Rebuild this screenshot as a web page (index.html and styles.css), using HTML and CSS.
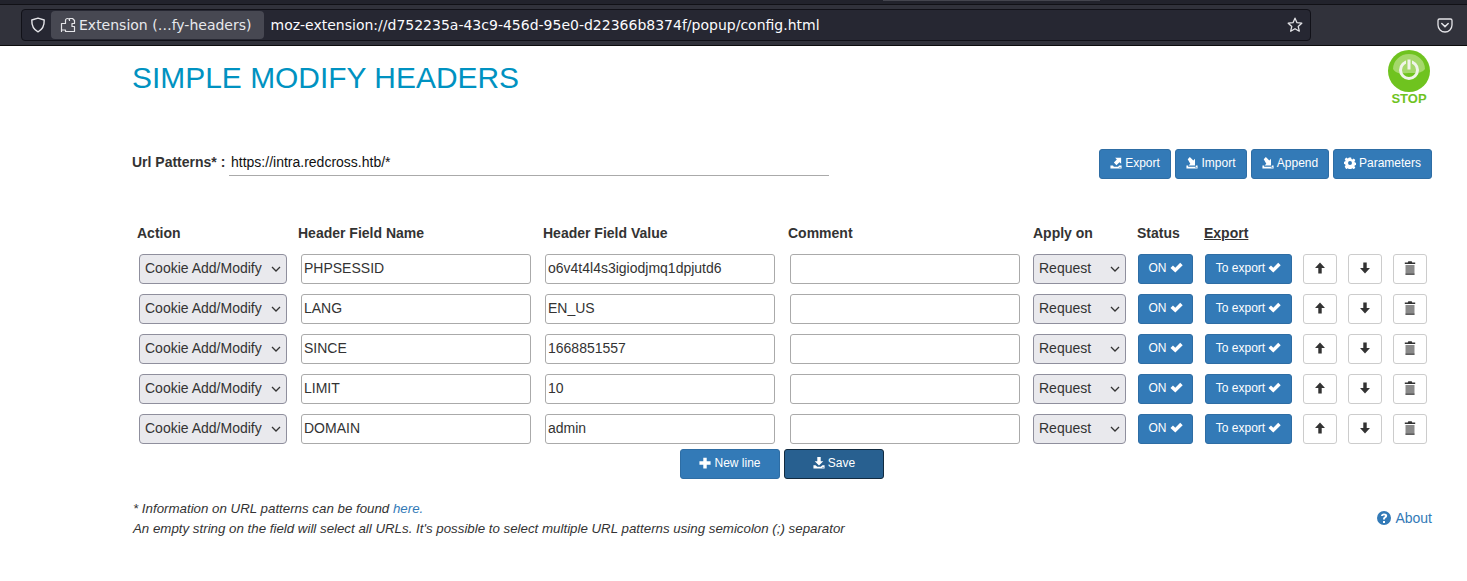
FILE: index.html
```html
<!DOCTYPE html>
<html>
	<head>
		<meta name="viewport" content="width=device-width, initial-scale=1" />
		<title>Simple Modify Headers</title>
		<link rel="stylesheet" href="styles.css">
	</head>
	<body>
		<svg class="sprites" width="0" height="0">
			<symbol id="i-export" viewBox="0 0 14 14"><path fill-rule="evenodd" d="M.5 10h3l1 1.300h5l1-1.300h3v3.500H.5zM11 12h1.300v.8H11zM4.500 6.500 8 3 6 1h7v7l-2-2-3.500 3.500z"/></symbol>
			<symbol id="i-import" viewBox="0 0 14 14"><path fill-rule="evenodd" d="M.5 10h2v1.300h9V10h2v3.500H.5zM11 12h1.300v.8H11zM2 2.500 4.500 0l4 4 2-2v8H3l2-2z"/></symbol>
			<symbol id="i-save" viewBox="0 0 14 14"><path fill-rule="evenodd" d="M5 0h4v5h3L7 10 2 5h3zM.5 9.500H3L5 11.500h4l2-2h2.500v4H.5zM11 11.800h1.300v.8H11z"/></symbol>
			<symbol id="i-plus" viewBox="0 0 14 14"><path d="M5 1h4v4h4.500v4H9v4.500H5V9H.5V5H5z"/></symbol>
			<symbol id="i-ok" viewBox="0 0 14 14"><path d="M.5 7.500 3.200 4.800l2.500 2.500L11 1.800l2.700 2.700-8 8z"/></symbol>
			<symbol id="i-up" viewBox="0 0 14 14"><path d="M7 .5l5.800 6.500H9v6.500H5V7H1.200z"/></symbol>
			<symbol id="i-down" viewBox="0 0 14 14"><path d="M5 .5h4V7h3.800L7 13.500 1.200 7H5z"/></symbol>
			<symbol id="i-trash" viewBox="0 0 14 14"><path d="M5.300.3h3.400l.5 1.300h3v1.400H1.800V1.600h3z"/><path d="M2.500 4h9v9.500h-9z" fill="#8a8a8a"/><path d="M2.500 12.700h9v1h-9z"/></symbol>
			<symbol id="i-cog" viewBox="0 0 14 14"><path fill-rule="evenodd" d="M5.700.5h2.600l.4 1.800 1.100.5 1.600-1 1.800 1.800-1 1.600.5 1.100 1.800.4v2.600l-1.800.4-.5 1.100 1 1.600-1.800 1.800-1.600-1-1.100.5-.4 1.800H5.700l-.4-1.800-1.100-.5-1.600 1L.8 11.300l1-1.600-.5-1.100-1.800-.4V5.600l1.800-.4.5-1.100-1-1.600L2.600.7l1.600 1 1.100-.5zM7 4.700a2.300 2.300 0 1 0 0 4.600 2.300 2.300 0 0 0 0-4.600z"/></symbol>
		</svg>

		<div class="browserBar">
			<div class="topStrip"><div class="tabEdge"></div></div>
			<div class="toolbar">
				<div class="urlBar">
					<svg class="shield" width="16" height="16" viewBox="0 0 16 16"><path d="M8 1.200 14.200 3c.2 5.500-1.800 9.600-6.200 11.800C3.600 12.600 1.600 8.500 1.800 3z" fill="none" stroke="#e4e4e8" stroke-width="1.400" stroke-linejoin="round"/></svg>
					<div class="identity">
						<svg width="16" height="16" viewBox="0 0 16 16"><path d="M1.500 14.500V6.500H5.500V3.500A2 2 0 0 1 9.500 3.500V1.500H12.500L14.500 3.500V6.500H12V9.500H14.500V14.500H5.500V13H1.500z" fill="none" stroke="#e4e4e8" stroke-width="1.200" stroke-linejoin="round"/></svg>
						<span>Extension (…fy-headers)</span>
					</div>
					<span class="url">moz-extension://d752235a-43c9-456d-95e0-d22366b8374f/popup/config.html</span>
					<svg class="star" width="16" height="16" viewBox="0 0 16 16"><path d="M8 1.200l2 4.500 4.800.5-3.600 3.200 1.100 4.800L8 11.700l-4.300 2.500 1.100-4.800L1.200 6.200 6 5.700z" fill="none" stroke="#e4e4e8" stroke-width="1.300" stroke-linejoin="round"/></svg>
				</div>
				<svg class="pocket" width="16" height="16" viewBox="0 0 16 16"><path d="M2.500 2h11A1.500 1.500 0 0 1 15 3.500V8a7 7 0 0 1-14 0V3.500A1.500 1.500 0 0 1 2.500 2z" fill="none" stroke="#e4e4e8" stroke-width="1.300"/><path d="M4.800 6.500 8 9.600l3.200-3.100" fill="none" stroke="#e4e4e8" stroke-width="1.500" stroke-linecap="round"/></svg>
			</div>
		</div>

		<main class="page">
			<div class="titleRow">
				<h1>SIMPLE MODIFY HEADERS</h1>
				<div class="stop">
					<svg width="44" height="44" viewBox="0 0 44 44">
						<circle cx="22" cy="22" r="21" fill="#6fc31f"/>
						<path d="M6 20a16 15 0 0 1 32 0c-4 5-10 4-16 4s-12 2-16-4z" fill="#a5d86b"/>
						<circle cx="22" cy="21" r="8.500" fill="none" stroke="#f0f4ea" stroke-width="3"/>
						<path d="M22 11v10" stroke="#a5d86b" stroke-width="6"/>
						<path d="M22 10.500v10" stroke="#f0f4ea" stroke-width="3"/>
					</svg>
					<span>STOP</span>
				</div>
			</div>

			<div class="urlRow">
				<label class="urlLabel">Url Patterns* :</label>
				<input class="urlInput" type="text" value="https://intra.redcross.htb/*" />
				<div class="topButtons">
					<button class="btn wExport"><svg class="ico"><use href="#i-export"/></svg><span>Export</span></button>
					<button class="btn wExport"><svg class="ico"><use href="#i-import"/></svg><span>Import</span></button>
					<button class="btn wAppend"><svg class="ico"><use href="#i-import"/></svg><span>Append</span></button>
					<button class="btn wParams"><svg class="ico"><use href="#i-cog"/></svg><span>Parameters</span></button>
				</div>
			</div>

			<div class="headRow">
				<span>Action</span>
				<span>Header Field Name</span>
				<span>Header Field Value</span>
				<span>Comment</span>
				<span>Apply on</span>
				<span>Status</span>
				<span class="underlined">Export</span>
			</div>

			<div class="row">
				<select class="sel selAction"><option>Cookie Add/Modify</option></select>
				<input class="field" type="text" value="PHPSESSID" />
				<input class="field" type="text" value="o6v4t4l4s3igiodjmq1dpjutd6" />
				<input class="field" type="text" value="" />
				<select class="sel selApply"><option>Request</option></select>
				<button class="btn wOn"><span>ON</span><svg class="ico after"><use href="#i-ok"/></svg></button>
				<button class="btn wTo"><span>To export</span><svg class="ico after"><use href="#i-ok"/></svg></button>
				<button class="btnPlain"><svg class="ico"><use href="#i-up"/></svg></button>
				<button class="btnPlain"><svg class="ico"><use href="#i-down"/></svg></button>
				<button class="btnPlain"><svg class="ico icoTrash"><use href="#i-trash"/></svg></button>
			</div>
			<div class="row">
				<select class="sel selAction"><option>Cookie Add/Modify</option></select>
				<input class="field" type="text" value="LANG" />
				<input class="field" type="text" value="EN_US" />
				<input class="field" type="text" value="" />
				<select class="sel selApply"><option>Request</option></select>
				<button class="btn wOn"><span>ON</span><svg class="ico after"><use href="#i-ok"/></svg></button>
				<button class="btn wTo"><span>To export</span><svg class="ico after"><use href="#i-ok"/></svg></button>
				<button class="btnPlain"><svg class="ico"><use href="#i-up"/></svg></button>
				<button class="btnPlain"><svg class="ico"><use href="#i-down"/></svg></button>
				<button class="btnPlain"><svg class="ico icoTrash"><use href="#i-trash"/></svg></button>
			</div>
			<div class="row">
				<select class="sel selAction"><option>Cookie Add/Modify</option></select>
				<input class="field" type="text" value="SINCE" />
				<input class="field" type="text" value="1668851557" />
				<input class="field" type="text" value="" />
				<select class="sel selApply"><option>Request</option></select>
				<button class="btn wOn"><span>ON</span><svg class="ico after"><use href="#i-ok"/></svg></button>
				<button class="btn wTo"><span>To export</span><svg class="ico after"><use href="#i-ok"/></svg></button>
				<button class="btnPlain"><svg class="ico"><use href="#i-up"/></svg></button>
				<button class="btnPlain"><svg class="ico"><use href="#i-down"/></svg></button>
				<button class="btnPlain"><svg class="ico icoTrash"><use href="#i-trash"/></svg></button>
			</div>
			<div class="row">
				<select class="sel selAction"><option>Cookie Add/Modify</option></select>
				<input class="field" type="text" value="LIMIT" />
				<input class="field" type="text" value="10" />
				<input class="field" type="text" value="" />
				<select class="sel selApply"><option>Request</option></select>
				<button class="btn wOn"><span>ON</span><svg class="ico after"><use href="#i-ok"/></svg></button>
				<button class="btn wTo"><span>To export</span><svg class="ico after"><use href="#i-ok"/></svg></button>
				<button class="btnPlain"><svg class="ico"><use href="#i-up"/></svg></button>
				<button class="btnPlain"><svg class="ico"><use href="#i-down"/></svg></button>
				<button class="btnPlain"><svg class="ico icoTrash"><use href="#i-trash"/></svg></button>
			</div>
			<div class="row">
				<select class="sel selAction"><option>Cookie Add/Modify</option></select>
				<input class="field" type="text" value="DOMAIN" />
				<input class="field" type="text" value="admin" />
				<input class="field" type="text" value="" />
				<select class="sel selApply"><option>Request</option></select>
				<button class="btn wOn"><span>ON</span><svg class="ico after"><use href="#i-ok"/></svg></button>
				<button class="btn wTo"><span>To export</span><svg class="ico after"><use href="#i-ok"/></svg></button>
				<button class="btnPlain"><svg class="ico"><use href="#i-up"/></svg></button>
				<button class="btnPlain"><svg class="ico"><use href="#i-down"/></svg></button>
				<button class="btnPlain"><svg class="ico icoTrash"><use href="#i-trash"/></svg></button>
			</div>

			<div class="saveRow">
				<button class="btn wSave"><svg class="ico"><use href="#i-plus"/></svg><span>New line</span></button>
				<button class="btn wSave active"><svg class="ico"><use href="#i-save"/></svg><span>Save</span></button>
			</div>

			<div class="notesRow">
				<p class="notes">
					* Information on URL patterns can be found <a href="#">here.</a><br />
					An empty string on the field will select all URLs. It's possible to select multiple URL patterns using semicolon (;) separator
				</p>
				<a class="about" href="#">
					<svg width="14" height="14" viewBox="0 0 14 14"><path fill-rule="evenodd" d="M7 0a7 7 0 1 1 0 14A7 7 0 0 1 7 0zM6 10h2v2H6zM7 2.500c-1.700 0-3 .9-3 2.500h2c0-.5.400-.8 1-.8s1 .3 1 .8c0 .9-2 1-2 3V8.500h2V8c0-1 2.200-1.200 2.200-3.200C10.200 3.300 8.700 2.500 7 2.500z"/></svg>
					About
				</a>
			</div>
		</main>
	</body>
</html>
```

FILE: styles.css
```css
html {
	font-family: "Liberation Sans", Arial, sans-serif;
	font-size: 14px;
	color: #333;
}
body {
	margin: 0px;
	background: #fff;
}
.sprites {
	position: absolute;
}

/* browser chrome */
.browserBar {
	height: 46px;
	background: #31323b;
	font-family: "DejaVu Sans", sans-serif;
	font-size: 14px;
	color: #fbfbfe;
}
.topStrip {
	height: 4px;
	background: #22232c;
	border-bottom: 1px solid #111116;
}
.tabEdge {
	width: 217px;
	height: 1px;
	margin-left: 883px;
	background: #44454e;
}
.toolbar {
	display: flex;
	align-items: center;
	height: 40px;
	padding-left: 21px;
	border-bottom: 1px solid #0c0c0d;
}
.urlBar {
	display: flex;
	flex: none;
	align-items: center;
	width: 1290px;
	height: 32px;
	box-sizing: border-box;
	background: #262732;
	border: 1px solid #111118;
	border-radius: 4px;
}
.shield {
	margin-left: 8px;
}
.identity {
	display: flex;
	align-items: center;
	gap: 3px;
	height: 28px;
	margin-left: 5px;
	padding: 0 12px 0 9px;
	background: #474852;
	border-radius: 4px;
	color: #e8e8ec;
}
.url {
	margin-left: 7px;
}
.star {
	margin-left: auto;
	margin-right: 7px;
}
.pocket {
	margin-left: 126px;
}

/* page */
.page {
	padding: 0 35px 0 132px;
}
.titleRow {
	display: flex;
	justify-content: space-between;
	height: 103px;
}
h1 {
	margin: 0;
	padding-top: 13px;
	font-size: 29.95px;
	line-height: 38px;
	font-weight: 400;
	color: #0092c1;
}
.stop {
	display: flex;
	flex-direction: column;
	align-items: center;
	width: 44px;
	margin-right: 1px;
	padding-top: 3px;
}
.stop span {
	margin-top: -1px;
	font-size: 13px;
	line-height: 13px;
	font-weight: 700;
	color: #6fc31f;
}
.urlRow {
	display: flex;
	align-items: flex-start;
	height: 75px;
}
.urlLabel {
	width: 97px;
	padding-top: 5px;
	line-height: 16px;
	font-weight: 700;
}
.urlInput {
	width: 600px;
	height: 27px;
	box-sizing: border-box;
	padding: 0 2px;
	border: none;
	border-bottom: 1px solid #aaa;
	outline: none;
	font: 14px "Liberation Sans", Arial, sans-serif;
	color: #111;
}
.topButtons {
	display: flex;
	gap: 4px;
	margin-left: auto;
}

/* buttons */
.btn {
	display: flex;
	align-items: center;
	justify-content: center;
	height: 30px;
	padding: 0 0 2px;
	box-sizing: border-box;
	background-color: #337ab7;
	border: 1px solid #2e6da4;
	border-radius: 3px;
	font: 12px "Liberation Sans", Arial, sans-serif;
	color: #fff;
	cursor: pointer;
}
.btn.active {
	background-color: #286090;
	border-color: #122b40;
}
.btnPlain {
	display: flex;
	align-items: center;
	justify-content: center;
	width: 34px;
	height: 30px;
	padding: 0;
	box-sizing: border-box;
	background: #fff;
	border: 1px solid #ccc;
	border-radius: 3px;
	color: #333;
	cursor: pointer;
}
.ico {
	width: 12px;
	height: 12px;
	margin-right: 3px;
	fill: currentColor;
}
.btnPlain .ico {
	width: 12px;
	height: 12px;
	margin: -3px 0 0 0;
}
.btnPlain .icoTrash {
	width: 14px;
	height: 14px;
}
.ico.after {
	width: 13px;
	height: 13px;
	margin: -2px 0 0 3px;
}
.wExport {
	width: 72px;
}
.wAppend {
	width: 78px;
}
.wParams {
	width: 99px;
}
.wSave {
	width: 100px;
}
.wOn {
	width: 55px;
}
.wTo {
	width: 87px;
}

/* header table */
.headRow {
	display: grid;
	grid-template-columns: 161px 245px 245px 245px 104px 67px 60px;
	height: 29px;
	padding: 1px 0 0 5px;
	font-weight: 700;
	line-height: 16px;
}
.underlined {
	text-decoration: underline;
}
.row {
	display: grid;
	grid-template-columns: 162px 244px 245px 243px 105px 67px 98px 45px 45px 34px;
	height: 30px;
	margin-bottom: 10px;
	padding-left: 7px;
}
.sel {
	-webkit-appearance: none;
	appearance: none;
	height: 30px;
	box-sizing: border-box;
	padding: 0 0 2px 5px;
	background: #e9e9ed url("data:image/svg+xml,%3Csvg xmlns='http://www.w3.org/2000/svg' width='10' height='6'%3E%3Cpath d='M1 1l4 4 4-4' fill='none' stroke='%23333' stroke-width='1.300'/%3E%3C/svg%3E") no-repeat right 5px center;
	border: 1px solid #8f8f9d;
	border-radius: 4px;
	font: 14px "Liberation Sans", Arial, sans-serif;
	color: #333;
}
.selAction {
	width: 148px;
}
.selApply {
	width: 93px;
}
.field {
	width: 230px;
	height: 30px;
	box-sizing: border-box;
	padding: 0 2px 2px;
	background: #fff;
	border: 1px solid #aaa;
	border-radius: 3px;
	outline: none;
	font: 14px "Liberation Sans", Arial, sans-serif;
	color: #333;
}
.saveRow {
	display: flex;
	gap: 4px;
	margin: -5px 0 0 548px;
}
.notesRow {
	display: flex;
	justify-content: space-between;
	align-items: center;
	margin-top: 19px;
}
.notes {
	margin: 0;
	padding: 1px 0 0 1px;
	font-size: 13.3px;
	line-height: 20px;
	font-style: italic;
}
a {
	color: #337ab7;
	text-decoration: none;
}
.about {
	display: flex;
	align-items: center;
	gap: 4px;
	padding-bottom: 2px;
	fill: #337ab7;
}
```
